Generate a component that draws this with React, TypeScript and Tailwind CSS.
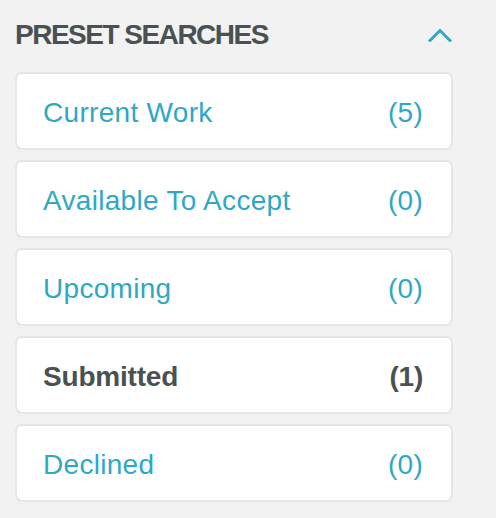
import React from "react";

const items = [
  { label: "Current Work", count: 5, active: false },
  { label: "Available To Accept", count: 0, active: false },
  { label: "Upcoming", count: 0, active: false },
  { label: "Submitted", count: 1, active: true },
  { label: "Declined", count: 0, active: false },
];

export default function App() {
  return (
    <div
      className="w-[496px] h-[518px] bg-[#f2f2f2] pl-[15px] pt-[17px]"
      style={{ fontFamily: '"Liberation Sans", Arial, sans-serif' }}
    >
      <div className="w-[438px]">
        <div className="flex items-center justify-between h-[34px] pr-[1px]">
          <h2 className="text-[28px] leading-[34px] font-bold text-[#4a5153] tracking-[-1.5px] pt-[1px]">
            PRESET SEARCHES
          </h2>
          <svg width="24" height="14" viewBox="0 0 24 14" className="mt-[2px]">
            <polyline
              points="2,12.5 12,2.5 22,12.5"
              fill="none"
              stroke="#2fa8c3"
              strokeWidth="3"
              strokeLinecap="square"
              strokeLinejoin="miter"
            />
          </svg>
        </div>
        <div className="mt-[21px] flex flex-col gap-[10px]">
          {items.map((it) => (
            <div
              key={it.label}
              className={
                "h-[78px] bg-white border-2 border-[#e6e6e6] rounded-[7px] flex items-center justify-between pl-[26px] pr-[28px] pt-[4px] text-[28px] " +
                (it.active
                  ? "font-bold text-[#4a5153] tracking-[-0.2px]"
                  : "text-[#2fa8c3] tracking-[0.3px]")
              }
            >
              <span>{it.label}</span>
              <span>({it.count})</span>
            </div>
          ))}
        </div>
      </div>
    </div>
  );
}
